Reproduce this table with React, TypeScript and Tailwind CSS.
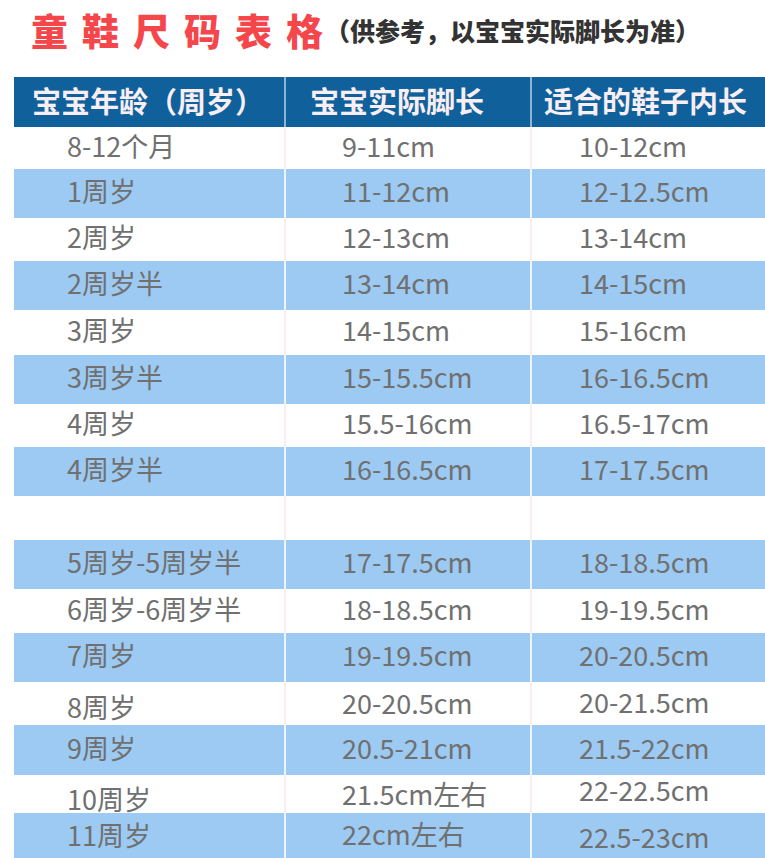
import React from 'react';

type Row = {
  age: string;
  foot: string;
  shoe: string;
  h: string;
  blue: boolean;
  pad?: [string, string, string];
};

const rows: Row[] = [
  { age: '8-12个月', foot: '9-11cm', shoe: '10-12cm', h: 'h-[42px]', blue: false },
  { age: '1周岁', foot: '11-12cm', shoe: '12-12.5cm', h: 'h-[49px]', blue: true },
  { age: '2周岁', foot: '12-13cm', shoe: '13-14cm', h: 'h-[43px]', blue: false },
  { age: '2周岁半', foot: '13-14cm', shoe: '14-15cm', h: 'h-[49px]', blue: true },
  { age: '3周岁', foot: '14-15cm', shoe: '15-16cm', h: 'h-[45px]', blue: false },
  { age: '3周岁半', foot: '15-15.5cm', shoe: '16-16.5cm', h: 'h-[49px]', blue: true },
  { age: '4周岁', foot: '15.5-16cm', shoe: '16.5-17cm', h: 'h-[43px]', blue: false },
  { age: '4周岁半', foot: '16-16.5cm', shoe: '17-17.5cm', h: 'h-[49px]', blue: true },
  { age: '', foot: '', shoe: '', h: 'h-[44px]', blue: false },
  { age: '5周岁-5周岁半', foot: '17-17.5cm', shoe: '18-18.5cm', h: 'h-[49px]', blue: true },
  { age: '6周岁-6周岁半', foot: '18-18.5cm', shoe: '19-19.5cm', h: 'h-[44px]', blue: false },
  { age: '7周岁', foot: '19-19.5cm', shoe: '20-20.5cm', h: 'h-[49px]', blue: true },
  {
    age: '8周岁',
    foot: '20-20.5cm',
    shoe: '20-21.5cm',
    h: 'h-[43px]',
    blue: false,
    pad: ['pt-[6px]', 'pb-[3px]', 'pb-[5px]'],
  },
  { age: '9周岁', foot: '20.5-21cm', shoe: '21.5-22cm', h: 'h-[50px]', blue: true },
  {
    age: '10周岁',
    foot: '21.5cm左右',
    shoe: '22-22.5cm',
    h: 'h-[38px]',
    blue: false,
    pad: ['pt-[8px]', 'pb-[2px]', 'pb-[9px]'],
  },
  {
    age: '11周岁',
    foot: '22cm左右',
    shoe: '22.5-23cm',
    h: 'h-[49px]',
    blue: true,
    pad: ['pb-[7px]', 'pb-[9px]', 'pb-[3px]'],
  },
];

const font = "font-['Noto_Sans_CJK_SC','Noto_Sans',sans-serif]";

const App: React.FC = () => {
  return (
    <div className={`w-[765px] h-[858px] overflow-hidden bg-white ${font}`}>
      {/* title */}
      <div className="flex items-center h-[60px] pl-[31px]">
        <span className="text-[37px] leading-none font-black text-[#f4464b] tracking-[14px] mr-[-12px]">
          童鞋尺码表格
        </span>
        <span className="text-[25px] leading-none font-black text-[#333333]">
          （供参考，以宝宝实际脚长为准）
        </span>
      </div>

      {/* table */}
      <div className="mt-[17px] ml-[14px] w-[751px]">
        <div className="grid grid-cols-[272px_246px_1fr] h-[50px] bg-[#10619b] text-[29px] font-bold text-[#f8eef3] leading-none">
          <div className="flex items-center pl-[18px] pb-[4px] border-r-2 border-[#8fb5d5]">宝宝年龄（周岁）</div>
          <div className="flex items-center pl-[24px] pb-[4px] border-r-2 border-[#8fb5d5]">宝宝实际脚长</div>
          <div className="flex items-center pl-[12px] pb-[4px]">适合的鞋子内长</div>
        </div>

        {rows.map((r, i) => (
          <div
            key={i}
            className={`grid grid-cols-[272px_246px_1fr] ${r.h} ${r.blue ? 'bg-[#9ccaf2]' : 'bg-white'} text-[27px] leading-none text-[#707070]`}
          >
            <div className={`flex items-center pl-[53px] border-r-2 ${r.blue ? 'border-[#eef4fb]' : 'border-[#fbecf2]'} ${r.pad ? r.pad[0] : 'pb-[6px]'}`}>
              {r.age}
            </div>
            <div className={`flex items-center pl-[56px] border-r-2 ${r.blue ? 'border-[#eef4fb]' : 'border-[#fbecf2]'} ${r.pad ? r.pad[1] : 'pb-[6px]'}`}>
              {r.foot}
            </div>
            <div className={`flex items-center pl-[47px] ${r.pad ? r.pad[2] : 'pb-[6px]'}`}>{r.shoe}</div>
          </div>
        ))}
      </div>
    </div>
  );
};

export default App;
